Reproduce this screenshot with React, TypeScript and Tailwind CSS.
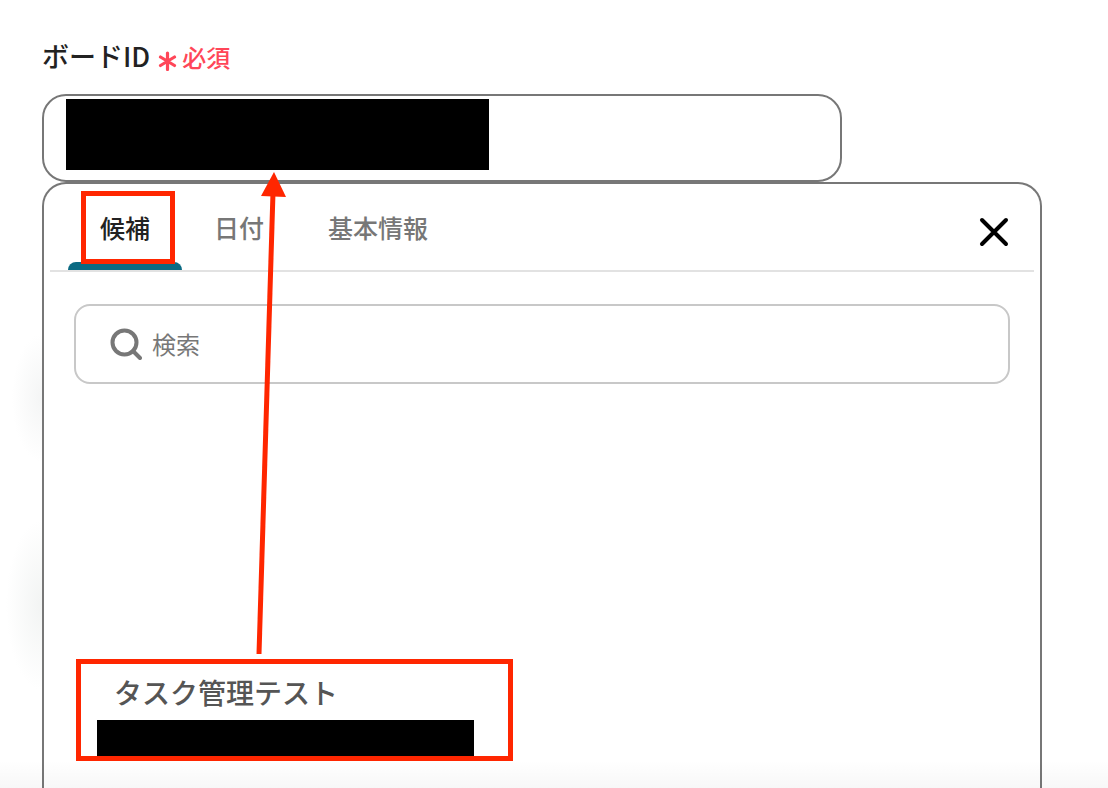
import { useState } from "react";

const tabs = ["候補", "日付", "基本情報"];

const SearchIcon = () => (
  <svg className="h-8 w-8 shrink-0" viewBox="0 0 32 32" fill="none" stroke="#777777" strokeWidth="4" aria-hidden="true">
    <circle cx="14.5" cy="14.5" r="12" />
    <path d="M23 23L30 30" strokeLinecap="round" />
  </svg>
);

const CloseIcon = () => (
  <svg className="h-8 w-8" viewBox="0 0 32 32" fill="none" stroke="#000000" strokeWidth="4" strokeLinecap="round" aria-hidden="true">
    <path d="M4 4L28 28M28 4L4 28" />
  </svg>
);

const RequiredMark = () => (
  <span className="flex items-center gap-1 pt-0.5 text-[#ff4658]">
    <svg className="mt-2 h-5 w-5" viewBox="0 0 20 20" stroke="currentColor" strokeWidth="3.2" strokeLinecap="round" aria-hidden="true">
      <path d="M9.5 2V18.5M2.5 6L16.5 14.5M16.5 6L2.5 14.5" />
    </svg>
    <span className="text-2xl font-medium">必須</span>
  </span>
);

// Arrow from the candidate up to the board ID field
const Arrow = () => (
  <svg className="pointer-events-none absolute left-[250px] top-[170px] z-20" width="50" height="490" aria-hidden="true">
    <path d="M23 22L9 484" stroke="#ff2600" strokeWidth="5" />
    <path d="M24 2L36 27L11 26Z" fill="#ff2600" />
  </svg>
);

const App = () => {
  const [active, setActive] = useState("候補");

  return (
    <main className="relative flex h-screen flex-col overflow-hidden bg-white pl-[42px] pr-[66px] pt-9 font-['Noto_Sans_CJK_JP','Noto_Sans',sans-serif]">
      {/* Soft shadows behind the panel */}
      <div className="absolute left-3 top-[334px] h-32 w-[60px] bg-[radial-gradient(closest-side,#f4f5f5,#ffffff)]" />
      <div className="absolute left-1.5 top-[520px] h-[170px] w-[72px] bg-[radial-gradient(closest-side,#f2f4f3,#ffffff)]" />

      <div className="flex h-10 items-center gap-2">
        <label htmlFor="board-id" className="text-[27px] font-medium text-[#222222]">
          ボードID
        </label>
        <RequiredMark />
      </div>

      {/* Board ID */}
      <div className="mr-[200px] mt-[18px] flex h-[88px] shrink-0 rounded-3xl border-2 border-[#777777] bg-white pl-[22px] pr-6 pt-[3px]">
        <div className="h-[71px] w-[423px] shrink-0 bg-black" />
        <input id="board-id" type="text" className="h-[71px] min-w-0 flex-1 px-2 text-2xl outline-none" />
      </div>

      <section className="relative flex-1 rounded-t-3xl border-2 border-b-0 border-[#777777] bg-white">
        <div className="mx-1.5 flex h-[88px] items-stretch border-b-2 border-[#e2e2e2] pl-[18px]">
          <div role="tablist" className="flex">
            {tabs.map((tab) => (
              <button
                key={tab}
                type="button"
                role="tab"
                aria-selected={active === tab}
                onClick={() => setActive(tab)}
                className={`relative px-8 pt-0.5 text-[25px] font-medium ${
                  active === tab ? "text-[#222222]" : "text-[#777777]"
                }`}
              >
                {tab}
                {active === tab && <span className="absolute inset-x-0 bottom-0 h-2 rounded-t-lg bg-[#0b6a83]" />}
                {tab === "候補" && (
                  <span className="absolute left-[13px] top-[7px] h-[73px] w-[94px] border-5 border-[#ff2600]" />
                )}
              </button>
            ))}
          </div>
          <button type="button" aria-label="閉じる" className="ml-auto mr-6 mt-2.5">
            <CloseIcon />
          </button>
        </div>

        {/* Search */}
        <label className="mx-[30px] mt-8 flex h-20 items-center gap-2.5 rounded-2xl border-2 border-[#c8c8c8] px-[34px]">
          <SearchIcon />
          <input
            type="search"
            aria-label="検索"
            placeholder="検索"
            className="min-w-0 flex-1 text-2xl outline-none placeholder:text-[#777777]"
          />
        </label>

        {/* Candidates */}
        <ul className="mt-[275px] px-8">
          <li className="w-[437px] border-5 border-[#ff2600]">
            <button type="button" className="block w-full pl-4 text-left">
              <span className="block h-14 pl-[17px] text-[28px] leading-14 font-medium text-[#555555]">タスク管理テスト</span>
              <span className="block h-9 w-[377px] bg-black" />
            </button>
          </li>
        </ul>
      </section>

      <div className="pointer-events-none absolute inset-x-0 bottom-0 h-7 bg-linear-to-b from-transparent to-black/3" />
      <Arrow />
    </main>
  );
};

export default App;
